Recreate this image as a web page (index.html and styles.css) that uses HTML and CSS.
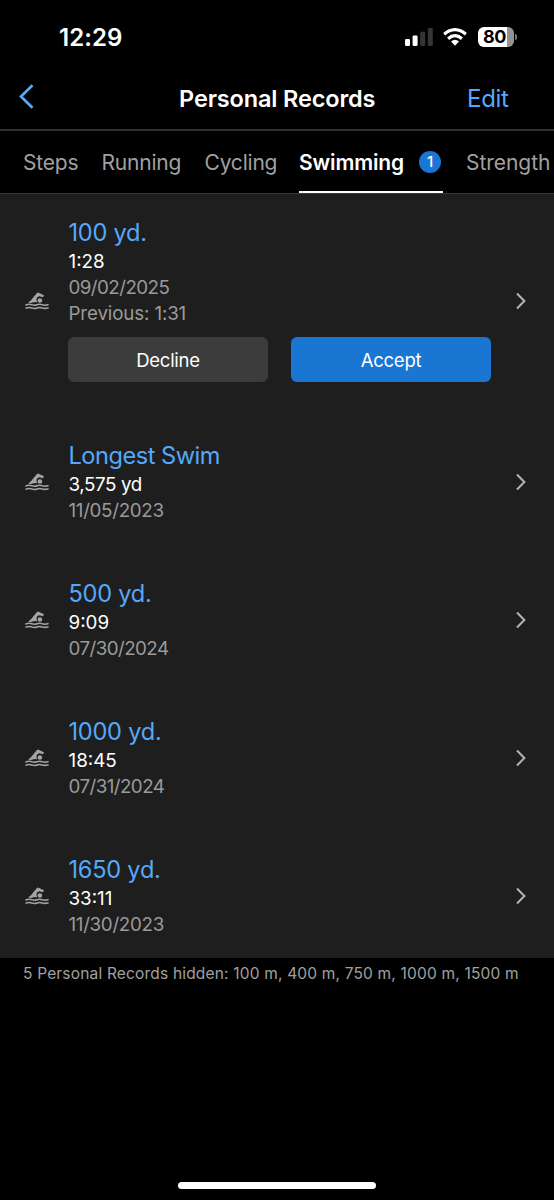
FILE: index.html
```
<!DOCTYPE html>
<html lang="en">
<head>
<meta charset="utf-8">
<title>Personal Records</title>
<link rel="stylesheet" href="styles.css">
</head>
<body>
<svg class="defs" width="0" height="0">
  <symbol id="swimmer" viewBox="0 0 24 18">
    <path d="M3.2 10.6Q6 9 9 4.6L12 1Q12.7.3 13.6.7L19 3.3 18 5.2 14.2 4.2 11.9 5.6Q11 8 12.2 10.4 10.6 9.7 8.6 10.3 5.8 11.3 3.2 10.6Z" fill="currentColor"/>
    <circle cx="14.9" cy="8.5" r="2.3" fill="currentColor"/>
    <path d="M.4 13.2Q3.8 11.6 7 12.8 9.6 13.7 12 12.8 14.6 11.8 17.2 12.8 20 13.7 23.6 12.6M.4 16.4Q3.8 14.8 7 16 9.6 16.9 12 16 14.6 15 17.2 16 20 16.9 23.6 15.8" fill="none" stroke="currentColor" stroke-width="1.6"/>
  </symbol>
  <symbol id="chevron" viewBox="0 0 10 18">
    <path d="M1 1.5 8.4 9 1 16.5" fill="none" stroke="currentColor" stroke-width="2"/>
  </symbol>
</svg>
<div class="screen">
  <header class="status">
    <span class="clock">12:29</span>
    <div class="indicators">
      <svg class="signal" viewBox="0 0 28 18"><rect x="0" y="11" width="5" height="7" rx="1.3" fill="#fff"/><rect x="7.6" y="7.5" width="5" height="10.5" rx="1.3" fill="#fff"/><rect x="15.2" y="3.8" width="5" height="14.2" rx="1.3" fill="#353535"/><rect x="22.8" y="0" width="5" height="18" rx="1.3" fill="#353535"/></svg>
      <svg class="wifi" viewBox="0 0 24 18"><g fill="none" stroke="#fff" stroke-width="3.2"><path d="M1.2 6.2Q12-2.9 22.8 6.2"/><path d="M5.1 10.7Q12 4.7 18.9 10.7"/></g><path d="M8 13.6Q12 10 16 13.6L12 17.8Z" fill="#fff"/></svg>
      <div class="battery"><span class="level">80</span><span class="nub"></span></div>
    </div>
  </header>
  <nav class="titlebar">
    <svg class="back" viewBox="0 0 15 25"><path d="M13.5 1.2 2 12.5 13.5 23.8" fill="none" stroke="currentColor" stroke-width="2.7"/></svg>
    <h1 class="title">Personal Records</h1>
    <span class="edit">Edit</span>
  </nav>
  <div class="tabs">
    <span class="tab steps">Steps</span>
    <span class="tab running">Running</span>
    <span class="tab cycling">Cycling</span>
    <span class="tab active"><span class="label">Swimming</span><span class="badge">1</span></span>
    <span class="tab strength">Strength</span>
  </div>
  <main class="records">
    <section class="record pending">
      <svg class="swim"><use href="#swimmer"/></svg>
      <div class="info">
        <h2 class="name">100 yd.</h2>
        <p class="value">1:28</p>
        <p class="date">09/02/2025</p>
        <p class="date prev">Previous: 1:31</p>
        <div class="actions"><button class="btn">Decline</button><button class="btn accept">Accept</button></div>
      </div>
      <svg class="more"><use href="#chevron"/></svg>
    </section>
    <section class="record">
      <svg class="swim"><use href="#swimmer"/></svg>
      <div class="info">
        <h2 class="name wide">Longest Swim</h2>
        <p class="value distance">3,575 yd</p>
        <p class="date ones">11/05/2023</p>
      </div>
      <svg class="more"><use href="#chevron"/></svg>
    </section>
    <section class="record">
      <svg class="swim"><use href="#swimmer"/></svg>
      <div class="info">
        <h2 class="name">500 yd.</h2>
        <p class="value">9:09</p>
        <p class="date">07/30/2024</p>
      </div>
      <svg class="more"><use href="#chevron"/></svg>
    </section>
    <section class="record">
      <svg class="swim"><use href="#swimmer"/></svg>
      <div class="info">
        <h2 class="name">1000 yd.</h2>
        <p class="value">18:45</p>
        <p class="date">07/31/2024</p>
      </div>
      <svg class="more"><use href="#chevron"/></svg>
    </section>
    <section class="record">
      <svg class="swim"><use href="#swimmer"/></svg>
      <div class="info">
        <h2 class="name">1650 yd.</h2>
        <p class="value">33:11</p>
        <p class="date ones">11/30/2023</p>
      </div>
      <svg class="more"><use href="#chevron"/></svg>
    </section>
  </main>
  <p class="hidden-note">5 Personal Records hidden: 100 m, 400 m, 750 m, 1000 m, 1500 m</p>
  <div class="home"></div>
</div>
</body>
</html>
```

FILE: styles.css
```
* { box-sizing: border-box; margin: 0; padding: 0; }
body { background: #000; font-family: Inter, "Liberation Sans", sans-serif; color: #fff; }
.defs { display: block; }
.screen { width: 554px; height: 1200px; display: flex; flex-direction: column; overflow: hidden; white-space: nowrap; }
.status { height: 66px; padding: 8px 37px 0 59px; display: flex; align-items: center; justify-content: space-between; }
.clock { font-size: 24px; font-weight: 600; letter-spacing: 0.1px; }
.indicators { display: flex; align-items: center; }
.signal { width: 28px; height: 18px; margin-right: 10px; }
.wifi { width: 24px; height: 18px; margin-right: 11px; }
.battery { display: flex; align-items: center; }
.level { width: 36px; height: 20px; padding-right: 3px; border-radius: 6px; background: linear-gradient(90deg, #fff 80%, #929292 80%); color: #000; font-size: 18px; font-weight: 700; line-height: 20px; text-align: center; letter-spacing: -0.4px; }
.nub { width: 2px; height: 6px; margin-left: 1px; border-radius: 0 2px 2px 0; background: #777; }
.titlebar { height: 65px; border-bottom: 2px solid #303030; padding: 0 46px 0 19px; display: grid; grid-template-columns: 60px 1fr 41px; align-items: center; }
.back { width: 15px; height: 25px; color: #55a8fb; margin-bottom: 2px; }
.title { padding-top: 2px; font-size: 23.5px; font-weight: 600; line-height: 30px; text-align: center; margin-left: 8.5px; letter-spacing: -0.15px; }
.edit { padding-top: 3px; font-size: 24px; line-height: 30px; color: #55a8fb; letter-spacing: -0.3px; }
.tabs { height: 63px; padding-left: 23px; display: flex; align-items: stretch; border-bottom: 1px solid #383838; line-height: 64px; font-size: 21px; color: #a0a0a0; letter-spacing: -0.2px; }
.tab { flex: none; }
.steps { width: 78.5px; }
.running { width: 103px; }
.cycling { width: 94.5px; }
.strength { letter-spacing: -0.05px; }
.active { width: 144px; margin-right: 23px; display: flex; align-items: center; justify-content: space-between; border-bottom: 2px solid #fff; color: #fff; font-weight: 600; letter-spacing: -0.12px; }
.label { padding-top: 3px; line-height: 60px; }
.badge { width: 22px; height: 22px; margin: 2px 2px 0 0; border-radius: 50%; background: #1976d2; font-size: 15px; font-weight: 500; line-height: 22px; text-align: center; }
.records { display: flex; flex-direction: column; gap: 13px; background: #1e1e1e; }
.record { height: 125px; padding: 0 28px 0 25px; display: flex; align-items: center; }
.swim { width: 24px; height: 18px; color: #a4a4a4; flex: none; }
.info { flex: 1; padding: 2px 0 0 19.5px; }
.pending { height: 213px; margin-bottom: -1px; }
.pending .info { padding: 0 0 1px 19.5px; }
.name { font-size: 23.6px; font-weight: 400; line-height: 30.5px; color: #55a8fb; letter-spacing: -0.25px; }
.wide { letter-spacing: -0.48px; }
.value, .date { font-size: 18.8px; line-height: 26px; }
.value { letter-spacing: 0; }
.distance { letter-spacing: -0.4px; }
.date { color: #9a9a9a; letter-spacing: -0.57px; }
.ones { letter-spacing: -0.32px; }
.prev { letter-spacing: -0.15px; }
.more { width: 10px; height: 18px; color: #b4b4b4; flex: none; }
.actions { display: flex; gap: 23px; margin: 10px 0 0 -0.5px; }
.btn { width: 200px; height: 45px; border: 0; border-radius: 6px; background: #3c3c3c; color: #fff; font: 400 18.5px/46px Inter, "Liberation Sans", sans-serif; letter-spacing: -0.25px; }
.accept { background: #1976d2; }
.hidden-note { padding: 5px 0 0 23px; font-size: 15.5px; line-height: 22px; color: #a0a0a0; letter-spacing: 0.18px; }
.home { width: 198px; height: 7px; margin: auto auto 11px 178px; border-radius: 4px; background: #fff; }
```
